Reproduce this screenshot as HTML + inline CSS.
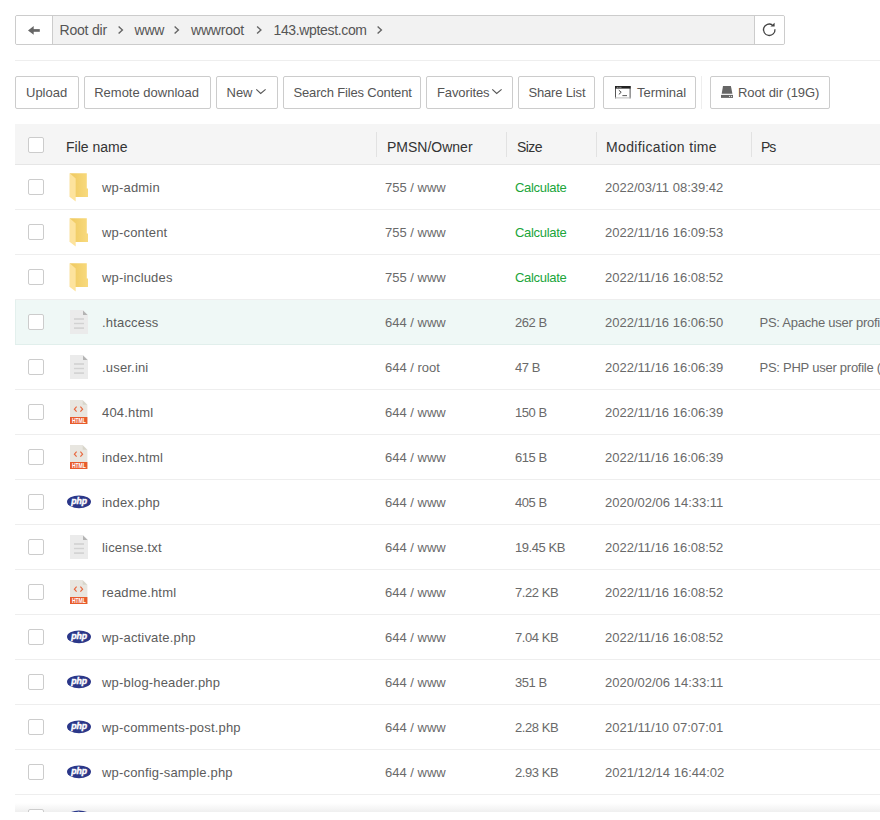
<!DOCTYPE html>
<html><head><meta charset="utf-8">
<style>
*{box-sizing:border-box;margin:0;padding:0}
html,body{width:880px;height:820px;overflow:hidden;background:#fff;font-family:"Liberation Sans",sans-serif;color:#555}
.abs{position:absolute}
.crumb{left:15px;top:15px;width:770px;height:30px;border:1px solid #ccc;border-radius:2px;background:#f2f2f2;overflow:hidden}
.back{left:0;top:0;width:37px;height:28px;background:#fff;border-right:1px solid #ccc}
.refresh{right:0;top:0;width:30px;height:28px;background:#fff;border-left:1px solid #ccc}
.ct{top:0px;height:28px;line-height:28px;font-size:14px;letter-spacing:-0.2px;color:#555;white-space:nowrap}
.sep{left:15px;top:60px;width:865px;height:1px;background:#eee}
.btn{top:76px;height:33px;border:1px solid #ccc;border-radius:2px;background:#fff;font-size:13px;line-height:31px;color:#555;white-space:nowrap;padding-left:10px}
.thead{left:15px;top:124px;width:865px;height:41px;background:#f5f5f5;border-bottom:1px solid #e6e6e6}
.th{top:3px;height:40px;line-height:40px;font-size:14px;color:#333;white-space:nowrap}
.vs{top:8px;width:1px;height:25px;background:#e2e2e2}
.cb{width:16px;height:16px;border:1px solid #ccc;border-radius:2px;background:#fff}
.row{left:15px;width:865px;height:45px;border-bottom:1px solid #eee}
.td{top:1px;height:44px;line-height:44px;font-size:13px;color:#6a6a6a;white-space:nowrap}
.fn{color:#5c5c5c}
.green{color:#20a53a}
.hover{background:#eff8f6;border-bottom-color:#e1efec;box-shadow:inset 1px 0 0 #e3f0ed}
.shade{left:15px;top:803px;width:865px;height:9px;background:linear-gradient(to bottom,#fff,#efefef)}
</style></head><body>

<div class="abs crumb">
  <div class="abs back"><svg class="abs" style="left:0;top:0" width="37" height="28" viewBox="0 0 37 28"><polygon points="12,14.4 17.7,9.9 17.7,18.8" fill="#666"/><rect x="17" y="13.1" width="6.8" height="2.7" fill="#666"/></svg></div>
  <span class="abs ct" style="left:43.5px">Root dir</span>
  <svg class="abs" style="left:0;top:0" width="770" height="28"><g fill="none" stroke="#666" stroke-width="1.4"><polyline points="102.6,10.6 106.4,14 102.6,17.6"/><polyline points="158.6,10.6 162.4,14 158.6,17.6"/><polyline points="241.1,10.6 244.9,14 241.1,17.6"/><polyline points="361.6,10.6 365.4,14 361.6,17.6"/></g></svg>
  <span class="abs ct" style="left:118.5px">www</span>
  <span class="abs ct" style="left:175px">wwwroot</span>
  <span class="abs ct" style="left:257.5px;letter-spacing:-0.35px">143.wptest.com</span>
  <div class="abs refresh"><svg class="abs" style="left:-1px;top:0" width="31" height="28" viewBox="0 0 31 28"><path d="M20.95,13.2 A5.75,5.75 0 1 1 18.3,8.9" fill="none" stroke="#444" stroke-width="1.3"/><polygon points="20.6,6.8 20.6,10.6 16.4,10.6" fill="#444"/></svg></div>
</div>

<div class="abs sep"></div>

<div class="abs btn" style="left:15px;width:64px">Upload</div>
<div class="abs btn" style="left:84px;width:127px;padding-left:9.2px">Remote download</div>
<div class="abs btn" style="left:216px;width:62px;padding-left:9.5px">New<svg class="abs" style="left:38.4px;top:11.3px" width="12" height="7" viewBox="0 0 12 7"><polyline points="1.3,1.3 5.7,5.5 10.6,1.3" fill="none" stroke="#555" stroke-width="1.1"/></svg></div>
<div class="abs btn" style="left:283px;width:138px;letter-spacing:-0.16px;padding-left:9.5px">Search Files Content</div>
<div class="abs btn" style="left:426px;width:87px;letter-spacing:-0.12px">Favorites<svg class="abs" style="left:63.8px;top:11.3px" width="12" height="7" viewBox="0 0 12 7"><polyline points="1.3,1.3 5.7,5.5 10.6,1.3" fill="none" stroke="#555" stroke-width="1.1"/></svg></div>
<div class="abs btn" style="left:518px;width:77px;letter-spacing:-0.17px;padding-left:9.5px">Share List</div>
<div class="abs btn" style="left:603px;width:93px;padding-left:33px"><svg class="abs" style="left:11px;top:9px" width="16" height="13" viewBox="0 0 16 13"><rect x="0" y="0" width="15.6" height="12.4" fill="#fff"/><rect x="0" y="0" width="1" height="12.4" fill="#555"/><rect x="14.6" y="0" width="1" height="12.4" fill="#555"/><rect x="0" y="0" width="15.6" height="2.6" fill="#222"/><rect x="1.8" y="0.9" width="0.9" height="0.9" fill="#ccc"/><rect x="3.6" y="0.9" width="0.9" height="0.9" fill="#ccc"/><rect x="5.4" y="0.9" width="0.9" height="0.9" fill="#ccc"/><rect x="0" y="11.4" width="15.6" height="1" fill="#bbb"/><polyline points="3.8,4.2 6.2,6.3 3.8,8.4" fill="none" stroke="#444" stroke-width="1"/><rect x="7.4" y="9.2" width="4.6" height="0.9" fill="#444"/></svg>Terminal</div>
<div class="abs" style="left:701px;top:76px;width:1px;height:33px;background:#eee"></div>
<div class="abs btn" style="left:710px;width:120px;padding-left:27px;letter-spacing:-0.08px"><svg class="abs" style="left:10px;top:9px" width="13" height="13" viewBox="0 0 13 13"><polygon points="2,0 9.9,0 11.4,7.7 0.7,7.7" fill="#666"/><rect x="0" y="8.9" width="12" height="3" fill="#666"/><rect x="8" y="9.9" width="1.1" height="1.1" fill="#ddd"/><rect x="10" y="9.9" width="1.1" height="1.1" fill="#ddd"/></svg>Root dir (19G)</div>

<div class="abs thead">
  <div class="abs cb" style="left:13px;top:13px"></div>
  <span class="abs th" style="left:51px">File name</span>
  <div class="abs vs" style="left:361px"></div>
  <span class="abs th" style="left:372px">PMSN/Owner</span>
  <div class="abs vs" style="left:491px"></div>
  <span class="abs th" style="left:502px;letter-spacing:-0.6px">Size</span>
  <div class="abs vs" style="left:581px"></div>
  <span class="abs th" style="left:591px;letter-spacing:0.35px">Modification time</span>
  <div class="abs vs" style="left:736px"></div>
  <span class="abs th" style="left:746px;letter-spacing:-1px">Ps</span>
</div>

<div class="abs" style="left:0;top:0;width:880px;height:812px;overflow:hidden"><div class="abs shade"></div><div class="abs row" style="top:165px">
  <div class="abs cb" style="left:13px;top:14px"></div>
  <svg class="abs" style="left:54px;top:7px" width="21" height="30" viewBox="0 0 21 30"><defs><linearGradient id="fb" x1="0" y1="0" x2="1" y2="0"><stop offset="0" stop-color="#efc95f"/><stop offset="1" stop-color="#f8da7e"/></linearGradient></defs><polygon points="0.8,1.3 17.8,1.3 17.8,16.6 19,16.6 19,25 0.8,25" fill="url(#fb)"/><polygon points="0.8,1.3 6.7,6.6 6.7,29.4 0.8,25" fill="#fde39d"/></svg>
  <span class="abs td fn" style="left:87px;letter-spacing:0.18px">wp-admin</span>
  <span class="abs td" style="left:370px">755 / www</span>
  <span class="abs td green" style="left:500px;letter-spacing:-0.3px">Calculate</span>
  <span class="abs td" style="left:590px">2022/03/11 08:39:42</span>
  <span class="abs td" style="left:744.5px;letter-spacing:-0.25px"></span>
</div>
<div class="abs row" style="top:210px">
  <div class="abs cb" style="left:13px;top:14px"></div>
  <svg class="abs" style="left:54px;top:7px" width="21" height="30" viewBox="0 0 21 30"><defs><linearGradient id="fb" x1="0" y1="0" x2="1" y2="0"><stop offset="0" stop-color="#efc95f"/><stop offset="1" stop-color="#f8da7e"/></linearGradient></defs><polygon points="0.8,1.3 17.8,1.3 17.8,16.6 19,16.6 19,25 0.8,25" fill="url(#fb)"/><polygon points="0.8,1.3 6.7,6.6 6.7,29.4 0.8,25" fill="#fde39d"/></svg>
  <span class="abs td fn" style="left:87px;letter-spacing:0.18px">wp-content</span>
  <span class="abs td" style="left:370px">755 / www</span>
  <span class="abs td green" style="left:500px;letter-spacing:-0.3px">Calculate</span>
  <span class="abs td" style="left:590px">2022/11/16 16:09:53</span>
  <span class="abs td" style="left:744.5px;letter-spacing:-0.25px"></span>
</div>
<div class="abs row" style="top:255px">
  <div class="abs cb" style="left:13px;top:14px"></div>
  <svg class="abs" style="left:54px;top:7px" width="21" height="30" viewBox="0 0 21 30"><defs><linearGradient id="fb" x1="0" y1="0" x2="1" y2="0"><stop offset="0" stop-color="#efc95f"/><stop offset="1" stop-color="#f8da7e"/></linearGradient></defs><polygon points="0.8,1.3 17.8,1.3 17.8,16.6 19,16.6 19,25 0.8,25" fill="url(#fb)"/><polygon points="0.8,1.3 6.7,6.6 6.7,29.4 0.8,25" fill="#fde39d"/></svg>
  <span class="abs td fn" style="left:87px;letter-spacing:0.18px">wp-includes</span>
  <span class="abs td" style="left:370px">755 / www</span>
  <span class="abs td green" style="left:500px;letter-spacing:-0.3px">Calculate</span>
  <span class="abs td" style="left:590px">2022/11/16 16:08:52</span>
  <span class="abs td" style="left:744.5px;letter-spacing:-0.25px"></span>
</div>
<div class="abs row hover" style="top:300px">
  <div class="abs cb" style="left:13px;top:14px"></div>
  <svg class="abs" style="left:55px;top:10px" width="18" height="24" viewBox="0 0 18 24"><path d="M0 0 H13 L18 5 V24 H0 Z" fill="#ebebeb"/><path d="M13 0.6 L17.6 5 H13 Z" fill="#b3b3b3"/><rect x="4" y="8.2" width="10" height="1.6" fill="#d2d2d2"/><rect x="4" y="12.8" width="10" height="1.4" fill="#d2d2d2"/><rect x="4" y="17.3" width="10" height="1.6" fill="#d2d2d2"/></svg>
  <span class="abs td fn" style="left:87px;letter-spacing:0.18px">.htaccess</span>
  <span class="abs td" style="left:370px">644 / www</span>
  <span class="abs td" style="left:500px;letter-spacing:-0.45px">262 B</span>
  <span class="abs td" style="left:590px">2022/11/16 16:06:50</span>
  <span class="abs td" style="left:744.5px;letter-spacing:-0.25px">PS: Apache user profile (.htaccess)</span>
</div>
<div class="abs row" style="top:345px">
  <div class="abs cb" style="left:13px;top:14px"></div>
  <svg class="abs" style="left:55px;top:10px" width="18" height="24" viewBox="0 0 18 24"><path d="M0 0 H13 L18 5 V24 H0 Z" fill="#ebebeb"/><path d="M13 0.6 L17.6 5 H13 Z" fill="#b3b3b3"/><rect x="4" y="8.2" width="10" height="1.6" fill="#d2d2d2"/><rect x="4" y="12.8" width="10" height="1.4" fill="#d2d2d2"/><rect x="4" y="17.3" width="10" height="1.6" fill="#d2d2d2"/></svg>
  <span class="abs td fn" style="left:87px;letter-spacing:0.18px">.user.ini</span>
  <span class="abs td" style="left:370px">644 / root</span>
  <span class="abs td" style="left:500px;letter-spacing:-0.45px">47 B</span>
  <span class="abs td" style="left:590px">2022/11/16 16:06:39</span>
  <span class="abs td" style="left:744.5px;letter-spacing:-0.25px">PS: PHP user profile (.user.ini)</span>
</div>
<div class="abs row" style="top:390px">
  <div class="abs cb" style="left:13px;top:14px"></div>
  <svg class="abs" style="left:55px;top:10px" width="18" height="24" viewBox="0 0 18 24"><path d="M0 0 H12.7 L17.4 4.8 V24 H0 Z" fill="#e8e6e0"/><path d="M12.7 0.4 L17.2 4.8 H12.7 Z" fill="#d8d5ca"/><path d="M6.6 6.7 L4.4 9.2 L6.6 11.7 M10.4 6.7 L12.6 9.2 L10.4 11.7" fill="none" stroke="#e8663c" stroke-width="1.15"/><rect x="0" y="17" width="17.4" height="7" fill="#e85c2c"/><text x="8.9" y="22.8" font-size="6.4" font-weight="bold" font-family="Liberation Sans" fill="#fff" text-anchor="middle" textLength="14" lengthAdjust="spacingAndGlyphs">HTML</text></svg>
  <span class="abs td fn" style="left:87px;letter-spacing:0.18px">404.html</span>
  <span class="abs td" style="left:370px">644 / www</span>
  <span class="abs td" style="left:500px;letter-spacing:-0.45px">150 B</span>
  <span class="abs td" style="left:590px">2022/11/16 16:06:39</span>
  <span class="abs td" style="left:744.5px;letter-spacing:-0.25px"></span>
</div>
<div class="abs row" style="top:435px">
  <div class="abs cb" style="left:13px;top:14px"></div>
  <svg class="abs" style="left:55px;top:10px" width="18" height="24" viewBox="0 0 18 24"><path d="M0 0 H12.7 L17.4 4.8 V24 H0 Z" fill="#e8e6e0"/><path d="M12.7 0.4 L17.2 4.8 H12.7 Z" fill="#d8d5ca"/><path d="M6.6 6.7 L4.4 9.2 L6.6 11.7 M10.4 6.7 L12.6 9.2 L10.4 11.7" fill="none" stroke="#e8663c" stroke-width="1.15"/><rect x="0" y="17" width="17.4" height="7" fill="#e85c2c"/><text x="8.9" y="22.8" font-size="6.4" font-weight="bold" font-family="Liberation Sans" fill="#fff" text-anchor="middle" textLength="14" lengthAdjust="spacingAndGlyphs">HTML</text></svg>
  <span class="abs td fn" style="left:87px;letter-spacing:0.18px">index.html</span>
  <span class="abs td" style="left:370px">644 / www</span>
  <span class="abs td" style="left:500px;letter-spacing:-0.45px">615 B</span>
  <span class="abs td" style="left:590px">2022/11/16 16:06:39</span>
  <span class="abs td" style="left:744.5px;letter-spacing:-0.25px"></span>
</div>
<div class="abs row" style="top:480px">
  <div class="abs cb" style="left:13px;top:14px"></div>
  <svg class="abs" style="left:51px;top:15px" width="26" height="14" viewBox="0 0 26 14"><ellipse cx="13" cy="6.8" rx="12" ry="6.4" fill="#2b3789"/><text x="13.2" y="9.3" font-size="8.3" font-weight="bold" font-style="italic" font-family="Liberation Sans" fill="#fff" stroke="#fff" stroke-width="0.4" text-anchor="middle" textLength="16" lengthAdjust="spacingAndGlyphs">php</text></svg>
  <span class="abs td fn" style="left:87px;letter-spacing:0.18px">index.php</span>
  <span class="abs td" style="left:370px">644 / www</span>
  <span class="abs td" style="left:500px;letter-spacing:-0.45px">405 B</span>
  <span class="abs td" style="left:590px">2020/02/06 14:33:11</span>
  <span class="abs td" style="left:744.5px;letter-spacing:-0.25px"></span>
</div>
<div class="abs row" style="top:525px">
  <div class="abs cb" style="left:13px;top:14px"></div>
  <svg class="abs" style="left:55px;top:10px" width="18" height="24" viewBox="0 0 18 24"><path d="M0 0 H13 L18 5 V24 H0 Z" fill="#ebebeb"/><path d="M13 0.6 L17.6 5 H13 Z" fill="#b3b3b3"/><rect x="4" y="8.2" width="10" height="1.6" fill="#d2d2d2"/><rect x="4" y="12.8" width="10" height="1.4" fill="#d2d2d2"/><rect x="4" y="17.3" width="10" height="1.6" fill="#d2d2d2"/></svg>
  <span class="abs td fn" style="left:87px;letter-spacing:0.18px">license.txt</span>
  <span class="abs td" style="left:370px">644 / www</span>
  <span class="abs td" style="left:500px;letter-spacing:-0.45px">19.45 KB</span>
  <span class="abs td" style="left:590px">2022/11/16 16:08:52</span>
  <span class="abs td" style="left:744.5px;letter-spacing:-0.25px"></span>
</div>
<div class="abs row" style="top:570px">
  <div class="abs cb" style="left:13px;top:14px"></div>
  <svg class="abs" style="left:55px;top:10px" width="18" height="24" viewBox="0 0 18 24"><path d="M0 0 H12.7 L17.4 4.8 V24 H0 Z" fill="#e8e6e0"/><path d="M12.7 0.4 L17.2 4.8 H12.7 Z" fill="#d8d5ca"/><path d="M6.6 6.7 L4.4 9.2 L6.6 11.7 M10.4 6.7 L12.6 9.2 L10.4 11.7" fill="none" stroke="#e8663c" stroke-width="1.15"/><rect x="0" y="17" width="17.4" height="7" fill="#e85c2c"/><text x="8.9" y="22.8" font-size="6.4" font-weight="bold" font-family="Liberation Sans" fill="#fff" text-anchor="middle" textLength="14" lengthAdjust="spacingAndGlyphs">HTML</text></svg>
  <span class="abs td fn" style="left:87px;letter-spacing:0.18px">readme.html</span>
  <span class="abs td" style="left:370px">644 / www</span>
  <span class="abs td" style="left:500px;letter-spacing:-0.45px">7.22 KB</span>
  <span class="abs td" style="left:590px">2022/11/16 16:08:52</span>
  <span class="abs td" style="left:744.5px;letter-spacing:-0.25px"></span>
</div>
<div class="abs row" style="top:615px">
  <div class="abs cb" style="left:13px;top:14px"></div>
  <svg class="abs" style="left:51px;top:15px" width="26" height="14" viewBox="0 0 26 14"><ellipse cx="13" cy="6.8" rx="12" ry="6.4" fill="#2b3789"/><text x="13.2" y="9.3" font-size="8.3" font-weight="bold" font-style="italic" font-family="Liberation Sans" fill="#fff" stroke="#fff" stroke-width="0.4" text-anchor="middle" textLength="16" lengthAdjust="spacingAndGlyphs">php</text></svg>
  <span class="abs td fn" style="left:87px;letter-spacing:0.18px">wp-activate.php</span>
  <span class="abs td" style="left:370px">644 / www</span>
  <span class="abs td" style="left:500px;letter-spacing:-0.45px">7.04 KB</span>
  <span class="abs td" style="left:590px">2022/11/16 16:08:52</span>
  <span class="abs td" style="left:744.5px;letter-spacing:-0.25px"></span>
</div>
<div class="abs row" style="top:660px">
  <div class="abs cb" style="left:13px;top:14px"></div>
  <svg class="abs" style="left:51px;top:15px" width="26" height="14" viewBox="0 0 26 14"><ellipse cx="13" cy="6.8" rx="12" ry="6.4" fill="#2b3789"/><text x="13.2" y="9.3" font-size="8.3" font-weight="bold" font-style="italic" font-family="Liberation Sans" fill="#fff" stroke="#fff" stroke-width="0.4" text-anchor="middle" textLength="16" lengthAdjust="spacingAndGlyphs">php</text></svg>
  <span class="abs td fn" style="left:87px;letter-spacing:0.18px">wp-blog-header.php</span>
  <span class="abs td" style="left:370px">644 / www</span>
  <span class="abs td" style="left:500px;letter-spacing:-0.45px">351 B</span>
  <span class="abs td" style="left:590px">2020/02/06 14:33:11</span>
  <span class="abs td" style="left:744.5px;letter-spacing:-0.25px"></span>
</div>
<div class="abs row" style="top:705px">
  <div class="abs cb" style="left:13px;top:14px"></div>
  <svg class="abs" style="left:51px;top:15px" width="26" height="14" viewBox="0 0 26 14"><ellipse cx="13" cy="6.8" rx="12" ry="6.4" fill="#2b3789"/><text x="13.2" y="9.3" font-size="8.3" font-weight="bold" font-style="italic" font-family="Liberation Sans" fill="#fff" stroke="#fff" stroke-width="0.4" text-anchor="middle" textLength="16" lengthAdjust="spacingAndGlyphs">php</text></svg>
  <span class="abs td fn" style="left:87px;letter-spacing:0.18px">wp-comments-post.php</span>
  <span class="abs td" style="left:370px">644 / www</span>
  <span class="abs td" style="left:500px;letter-spacing:-0.45px">2.28 KB</span>
  <span class="abs td" style="left:590px">2021/11/10 07:07:01</span>
  <span class="abs td" style="left:744.5px;letter-spacing:-0.25px"></span>
</div>
<div class="abs row" style="top:750px">
  <div class="abs cb" style="left:13px;top:14px"></div>
  <svg class="abs" style="left:51px;top:15px" width="26" height="14" viewBox="0 0 26 14"><ellipse cx="13" cy="6.8" rx="12" ry="6.4" fill="#2b3789"/><text x="13.2" y="9.3" font-size="8.3" font-weight="bold" font-style="italic" font-family="Liberation Sans" fill="#fff" stroke="#fff" stroke-width="0.4" text-anchor="middle" textLength="16" lengthAdjust="spacingAndGlyphs">php</text></svg>
  <span class="abs td fn" style="left:87px;letter-spacing:0.18px">wp-config-sample.php</span>
  <span class="abs td" style="left:370px">644 / www</span>
  <span class="abs td" style="left:500px;letter-spacing:-0.45px">2.93 KB</span>
  <span class="abs td" style="left:590px">2021/12/14 16:44:02</span>
  <span class="abs td" style="left:744.5px;letter-spacing:-0.25px"></span>
</div>
<div class="abs row" style="top:795px">
  <div class="abs cb" style="left:13px;top:14px"></div>
  <svg class="abs" style="left:51px;top:15px" width="26" height="14" viewBox="0 0 26 14"><ellipse cx="13" cy="6.8" rx="12" ry="6.4" fill="#2b3789"/><text x="13.2" y="9.3" font-size="8.3" font-weight="bold" font-style="italic" font-family="Liberation Sans" fill="#fff" stroke="#fff" stroke-width="0.4" text-anchor="middle" textLength="16" lengthAdjust="spacingAndGlyphs">php</text></svg>
  <span class="abs td fn" style="left:87px;letter-spacing:0.18px">wp-cron.php</span>
  <span class="abs td" style="left:370px">644 / www</span>
  <span class="abs td" style="left:500px;letter-spacing:-0.45px">3.93 KB</span>
  <span class="abs td" style="left:590px">2022/11/16 16:08:52</span>
  <span class="abs td" style="left:744.5px;letter-spacing:-0.25px"></span>
</div></div>
</body></html>
